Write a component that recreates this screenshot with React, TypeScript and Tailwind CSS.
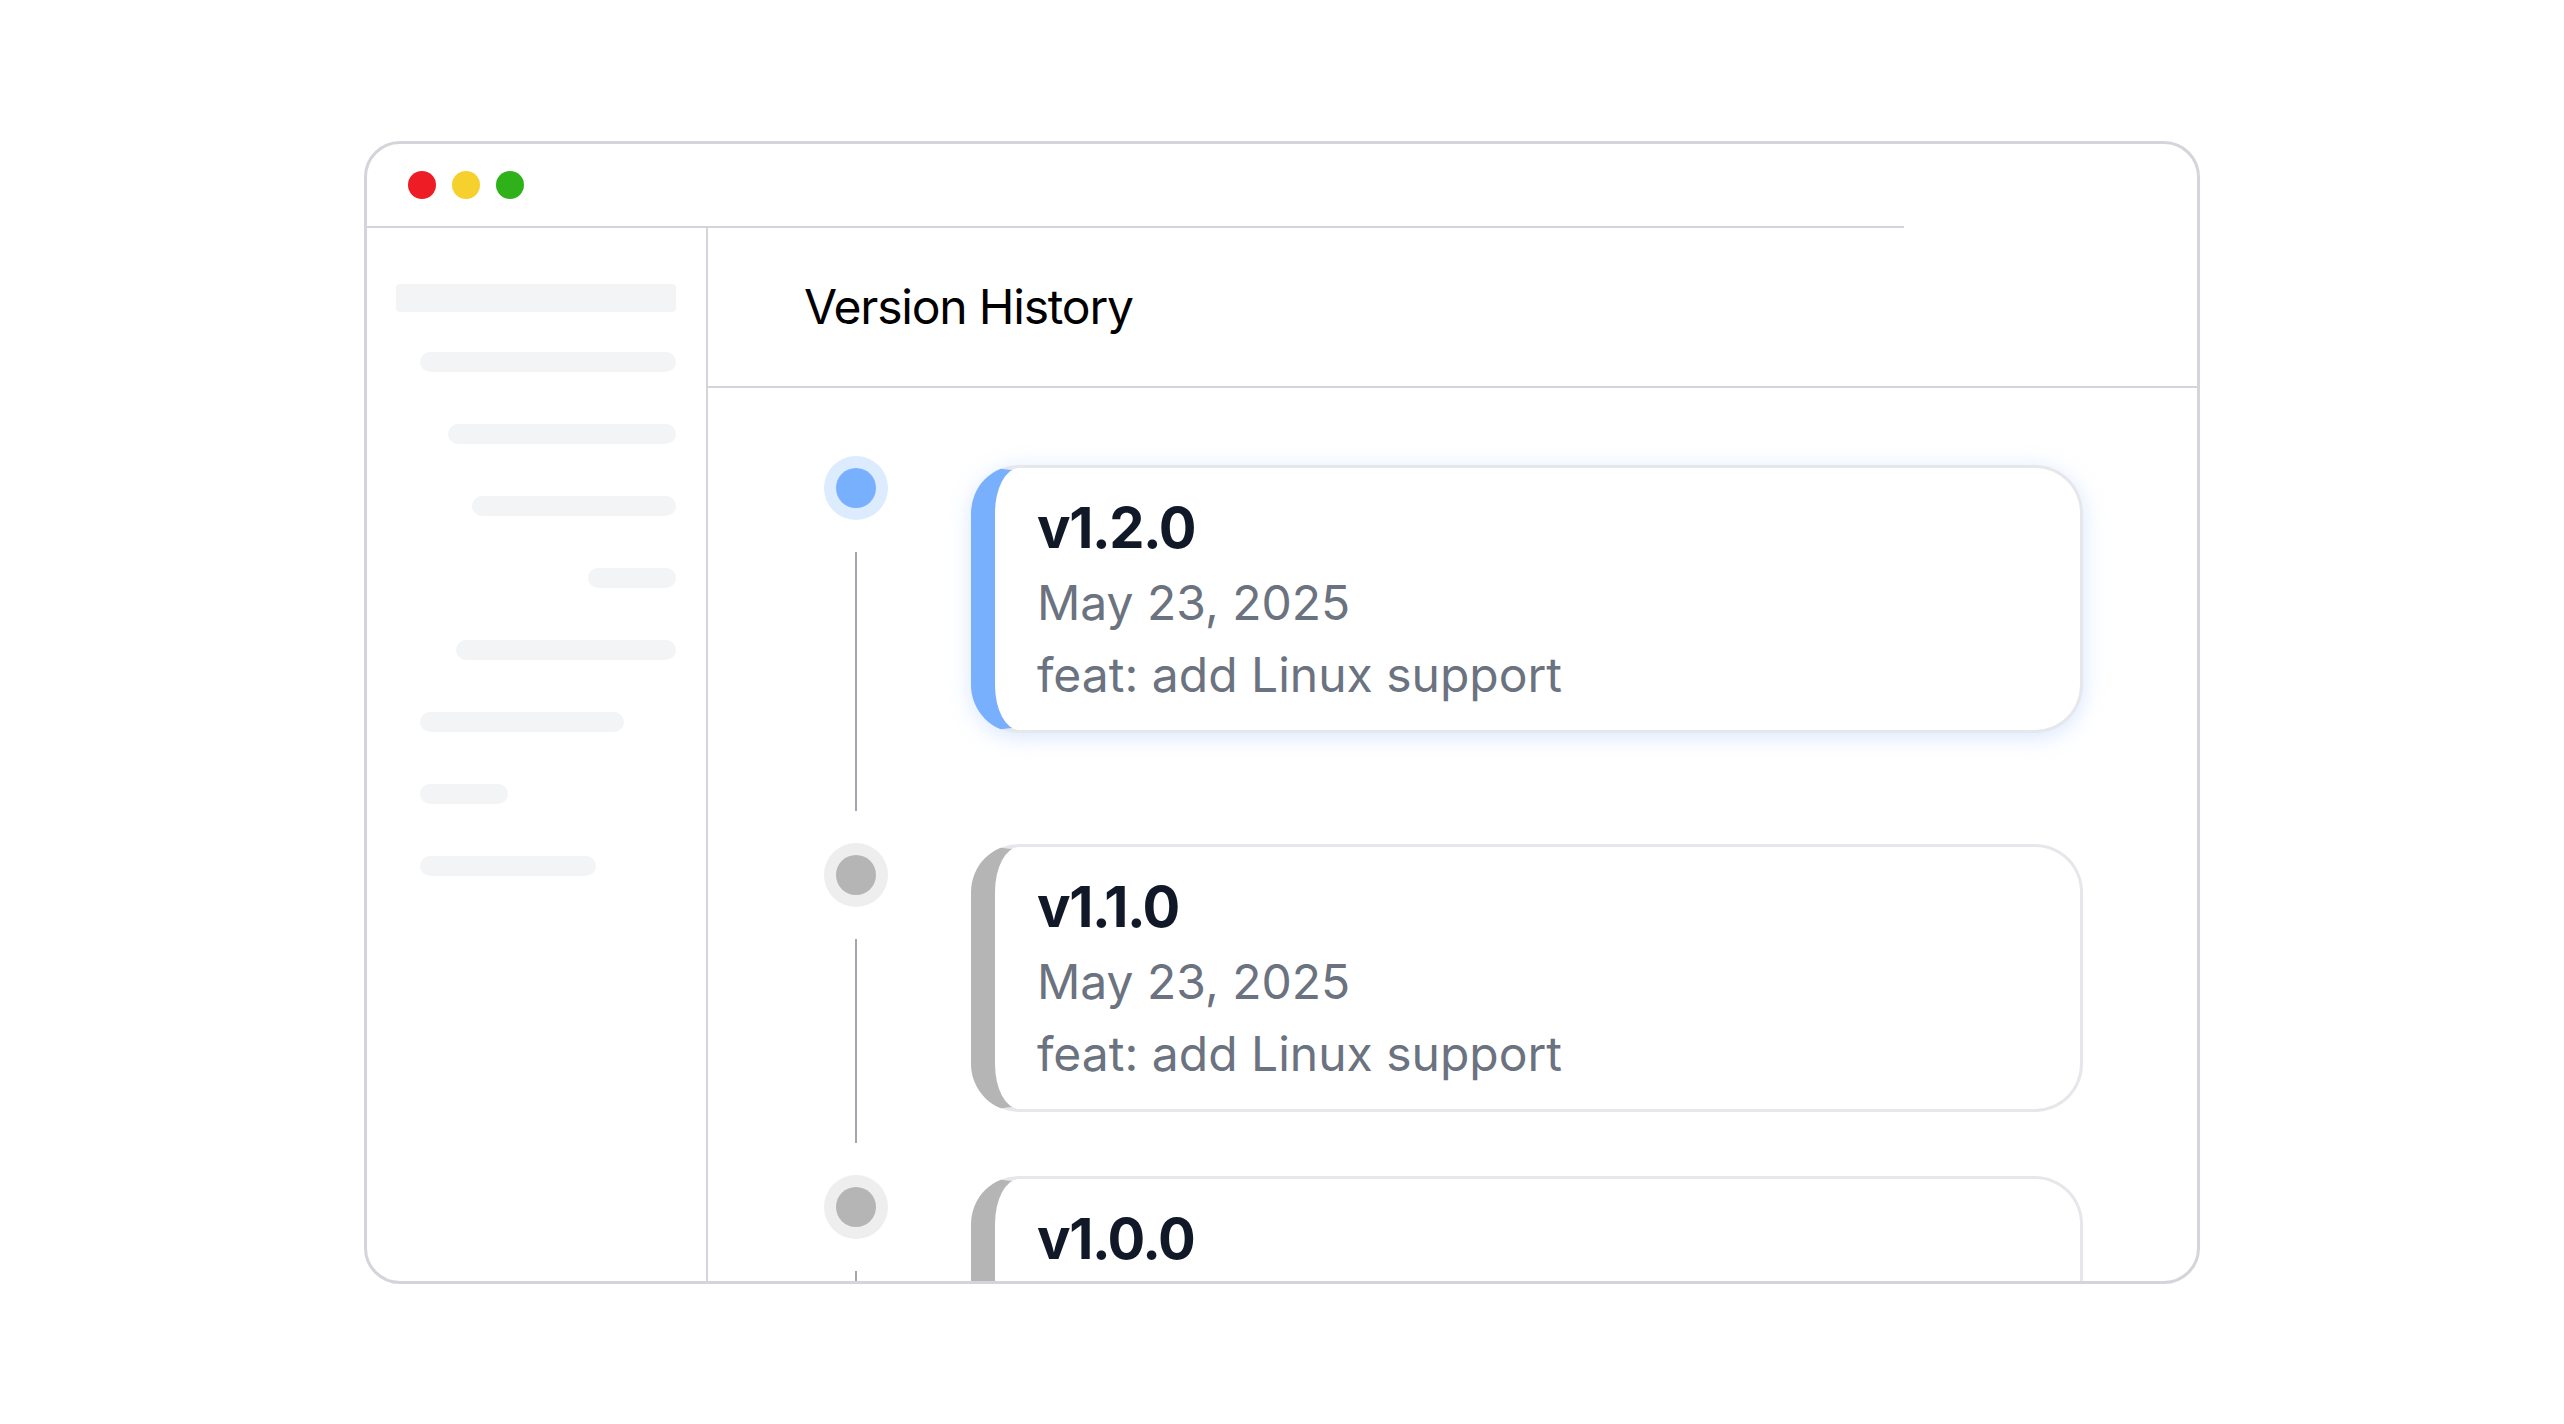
const sidebarBars = [
  { ml: "ml-[24px]", w: "w-[256px]" },
  { ml: "ml-[52px]", w: "w-[228px]" },
  { ml: "ml-[76px]", w: "w-[204px]" },
  { ml: "ml-[192px]", w: "w-[88px]" },
  { ml: "ml-[60px]", w: "w-[220px]" },
  { ml: "ml-[24px]", w: "w-[204px]" },
  { ml: "ml-[24px]", w: "w-[88px]" },
  { ml: "ml-[24px]", w: "w-[176px]" },
];

type Release = {
  version: string;
  date?: string;
  message?: string;
  active?: boolean;
  rowClass: string;
  cardClass: string;
};

// last entry is clipped by the window frame, only its title shows
const releases: Release[] = [
  { version: "v1.2.0", date: "May 23, 2025", message: "feat: add Linux support", active: true, rowClass: "h-[387px]", cardClass: "mt-[9px]" },
  { version: "v1.1.0", date: "May 23, 2025", message: "feat: add Linux support", rowClass: "h-[332px]", cardClass: "mt-[1px]" },
  { version: "v1.0.0", rowClass: "h-[332px]", cardClass: "mt-[1px]" },
];

function TimelineItem({ release }: { release: Release }) {
  const { active } = release;
  return (
    <div className={`flex shrink-0 ${release.rowClass}`}>
      {/* dot + rail */}
      <div className="flex w-[64px] shrink-0 flex-col items-center">
        <div className={`flex h-[64px] w-[64px] shrink-0 items-center justify-center rounded-full ${active ? "bg-[#dcebfe]" : "bg-[#eeeeee]"}`}>
          <div className={`h-[40px] w-[40px] rounded-full ${active ? "bg-[#79b0fd]" : "bg-[#b5b5b5]"}`} />
        </div>
        <div className="my-[32px] w-[2px] flex-1 bg-[#a3a6ae]" />
      </div>

      {/* card */}
      <div className={`ml-[83px] w-[1112px] shrink-0 self-start ${release.cardClass}`}>
        <div
          className={`min-h-[266px] rounded-[48px] border-[3px] border-l-[24px] border-[#e5e7eb] bg-white pb-[19px] pl-[42px] pt-[24px] ${
            active ? "border-l-[#79b0fd] shadow-[0_4px_22px_rgba(120,170,250,0.28)]" : "border-l-[#b5b5b5]"
          }`}
        >
          <div className="text-[56px] font-bold leading-[72px] tracking-[-0.025em] text-[#111827]">{release.version}</div>
          {release.date && <div className="mt-[3px] text-[48px] leading-[72px] text-[#6b7280]">{release.date}</div>}
          {release.message && <div className="text-[48px] leading-[72px] text-[#6b7280]">{release.message}</div>}
        </div>
      </div>
    </div>
  );
}

export default function App() {
  return (
    <div className="h-[1424px] w-full bg-white pl-[364px] pt-[141px] font-['Inter','Noto_Sans',sans-serif]">
      <div className="flex h-[1143px] w-[1836px] flex-col overflow-hidden rounded-[36px] border-[3px] border-[#d3d5db] bg-white">
        {/* Title bar */}
        <div className="flex h-[82px] shrink-0 items-center gap-[16px] pl-[41px]">
          <span className="h-[28px] w-[28px] rounded-full bg-[#ee1c25]" />
          <span className="h-[28px] w-[28px] rounded-full bg-[#f6d02c]" />
          <span className="h-[28px] w-[28px] rounded-full bg-[#2fb11a]" />
        </div>
        <div className="h-[2px] w-[1537px] shrink-0 bg-[#d3d5db]" />

        <div className="flex min-h-0 flex-1">
          {/* Sidebar skeleton */}
          <div className="flex w-[341px] shrink-0 flex-col items-start border-r-2 border-[#d3d5db] pl-[29px] pt-[56px]">
            <div className="h-[28px] w-[280px] rounded-[4px] bg-[#f3f4f6]" />
            <div className="mt-[40px] flex flex-col items-start gap-[52px]">
              {sidebarBars.map((b, i) => (
                <div key={i} className={`h-[20px] rounded-full bg-[#f3f4f6] ${b.ml} ${b.w}`} />
              ))}
            </div>
          </div>

          {/* Main */}
          <div className="flex min-w-0 flex-1 flex-col overflow-hidden">
            <div className="flex h-[160px] shrink-0 items-center border-b-2 border-[#d3d5db] pl-[96px]">
              <h1 className="text-[48px] font-normal tracking-[-0.025em] text-black">Version History</h1>
            </div>
            <div className="flex flex-col pl-[116px] pt-[68px]">
              {releases.map((r) => (
                <TimelineItem key={r.version} release={r} />
              ))}
            </div>
          </div>
        </div>
      </div>
    </div>
  );
}
